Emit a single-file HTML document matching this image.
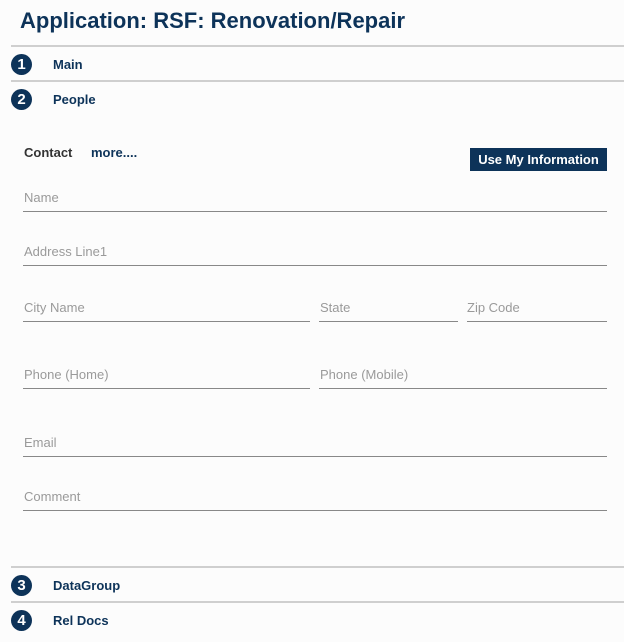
<!DOCTYPE html>
<html><head><style>
body{margin:0;width:624px;height:642px;background:#fcfcfc;font-family:"Liberation Sans",sans-serif;position:relative;overflow:hidden}
.a{position:absolute}
h1{position:absolute;left:20px;top:8px;margin:0;font-size:22px;font-weight:bold;color:#0d3359}
.hr{position:absolute;left:11px;right:0;height:2px;background:#cfcfcf}
.c{position:absolute;left:11px;width:21px;height:21px;border-radius:50%;background:#0d3359;color:#fff;font-weight:bold;font-size:15px;text-align:center;line-height:21px}
.t{position:absolute;left:53px;font-size:13px;font-weight:bold;color:#0d3359}
.l{position:absolute;font-size:13px;color:#9a9a9a}
.u{position:absolute;height:1px;background:#888}
</style></head><body>
<h1>Application: RSF: Renovation/Repair</h1>
<div class="hr" style="top:45px"></div>
<div class="c" style="top:54px">1</div><div class="t" style="top:57px">Main</div>
<div class="hr" style="top:80px"></div>
<div class="c" style="top:89px">2</div><div class="t" style="top:92px">People</div>
<div class="a" style="left:24px;top:145px;font-size:13px;font-weight:bold;color:#333">Contact</div>
<div class="a" style="left:91px;top:145px;font-size:13px;font-weight:bold;color:#0d3359">more....</div>
<div class="a" style="left:470px;top:148px;width:137px;height:23px;background:#0d3359;color:#fff;font-weight:bold;font-size:13px;text-align:center;line-height:23px">Use My Information</div>
<div class="l" style="left:24px;top:190px">Name</div><div class="u" style="left:23px;width:584px;top:211px"></div>
<div class="l" style="left:24px;top:244px">Address Line1</div><div class="u" style="left:23px;width:584px;top:265px"></div>
<div class="l" style="left:24px;top:300px">City Name</div><div class="u" style="left:23px;width:287px;top:321px"></div>
<div class="l" style="left:320px;top:300px">State</div><div class="u" style="left:319px;width:139px;top:321px"></div>
<div class="l" style="left:467px;top:300px">Zip Code</div><div class="u" style="left:467px;width:140px;top:321px"></div>
<div class="l" style="left:24px;top:367px">Phone (Home)</div><div class="u" style="left:23px;width:287px;top:388px"></div>
<div class="l" style="left:320px;top:367px">Phone (Mobile)</div><div class="u" style="left:319px;width:288px;top:388px"></div>
<div class="l" style="left:24px;top:435px">Email</div><div class="u" style="left:23px;width:584px;top:456px"></div>
<div class="l" style="left:24px;top:489px">Comment</div><div class="u" style="left:23px;width:584px;top:510px"></div>
<div class="hr" style="top:566px"></div>
<div class="c" style="top:575px">3</div><div class="t" style="top:578px">DataGroup</div>
<div class="hr" style="top:601px"></div>
<div class="c" style="top:610px">4</div><div class="t" style="top:613px">Rel Docs</div>
</body></html>
